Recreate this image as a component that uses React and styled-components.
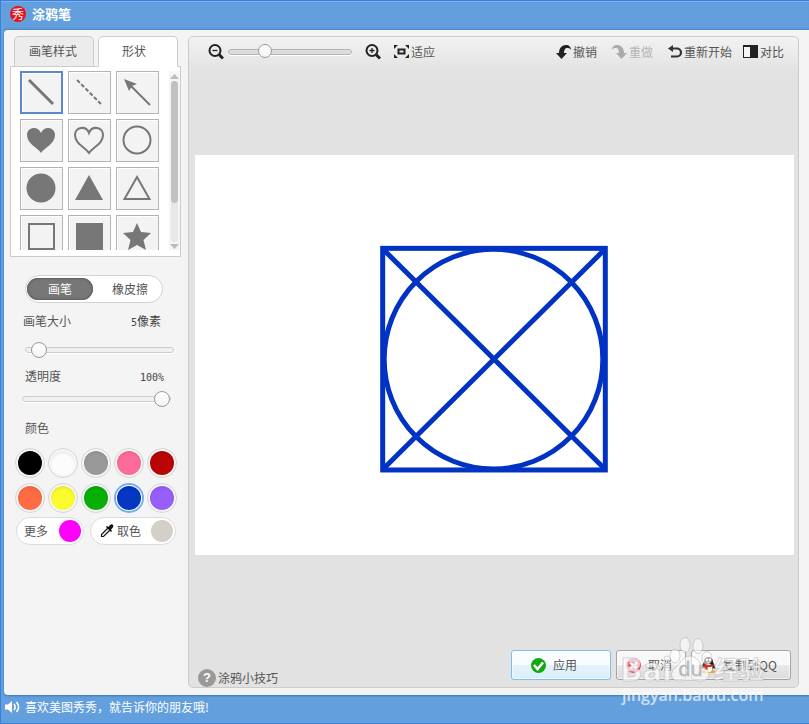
import { useState } from 'react'
import styled, { createGlobalStyle } from 'styled-components'

const GlobalStyle = createGlobalStyle`
  * {
    box-sizing: border-box;
  }

  body {
    margin: 0;
    font-family: "Noto Sans CJK SC", "Liberation Sans", sans-serif;
    font-size: 12px;
    line-height: 16px;
    color: #555;
  }

  button {
    font: inherit;
    color: inherit;
    padding: 0;
    border: 0;
    background: none;
    cursor: pointer;
    white-space: nowrap;
  }

  svg {
    display: block;
    flex-shrink: 0;
  }
`

const Window = styled.div`
  min-height: 100vh;
  display: flex;
  flex-direction: column;
  padding-left: 4px;
  background: #639fdc;
  border-top: 1px solid #3a7fdb;
  border-bottom: 1px solid #3a7fdb;
  box-shadow: inset 1px 0 #3a7fdb, inset 0 1px #7db2ee;
`

const TitleBar = styled.header`
  height: 29px;
  display: flex;
  align-items: center;
  gap: 6px;
  padding: 0 6px 4px;
  box-shadow: inset 0 -2px 2px -1px #4d86c4;
`

const Logo = styled.span`
  width: 16px;
  height: 16px;
  border-radius: 50%;
  background: #e8121c;
  color: white;
  font-size: 12px;
  text-align: center;
`

const Title = styled.h1`
  margin: 0;
  font-size: 13px;
  font-weight: 700;
  color: white;
`

const Body = styled.div`
  flex: 1;
  display: flex;
  padding: 6px 10px 7px 0;
  background: #f4f4f4;
  border-radius: 4px 0 0 4px;
  box-shadow: 0 1px 2px #3f78b5;
`

const Sidebar = styled.aside`
  width: 184px;
  flex-shrink: 0;
  padding-left: 6px;
`

const Tabs = styled.div`
  display: flex;
  gap: 4px;
  padding-left: 4px;
`

const Tab = styled.button`
  width: 80px;
  height: 31px;
  margin-bottom: -1px;
  padding: 0 ${props => props.$active ? '8px' : '2px'} 2px 0;
  border: 1px solid #ccc;
  border-bottom-color: ${props => props.$active ? 'white' : '#ccc'};
  border-radius: 5px 5px 0 0;
  background: ${props => props.$active ? 'white' : '#ececec'};
  position: relative;
`

const ShapePanel = styled.div`
  width: 171px;
  height: 191px;
  display: flex;
  justify-content: space-between;
  padding: 4px 0 6px 9px;
  border: 1px solid #ccc;
  background: white;
`

const ShapeGrid = styled.div`
  display: grid;
  grid-template-columns: repeat(3, 43px);
  grid-auto-rows: 43px;
  gap: 5px;
  overflow: hidden;
`

const ShapeButton = styled.button`
  display: flex;
  align-items: center;
  justify-content: center;
  padding: 0 1px 1px 0;
  border: ${props => props.$active ? '2px solid #5b89cd' : '1px solid #b3b3b3'};
  background: #f3f3f3;
  box-shadow: inset 1px 1px white;
  color: #777;
`

const Scrollbar = styled.div`
  width: 11px;
  display: flex;
  flex-direction: column;
  align-items: center;
  gap: 2px;
  padding: 3px 0 1px;
  background: #f5f5f5;
  color: #bbb;
`

const ScrollTrack = styled.div`
  flex: 1;
  width: 7px;
  border-radius: 4px;
  background: #e8e8e8;
`

const ScrollThumb = styled.div`
  height: 76%;
  border-radius: 4px;
  background: #c1c1c1;
`

const ModeSwitch = styled.div`
  width: 138px;
  height: 28px;
  display: flex;
  justify-content: space-between;
  margin: 18px 0 0 15px;
  padding: 2px 1px;
  border: 1px solid #d2d2d2;
  border-radius: 14px;
  background: white;
`

const ModeButton = styled.button`
  width: ${props => props.$width};
  border-radius: 11px;
  ${props => props.$active && `
    background: #777;
    color: white;
    box-shadow: inset 0 0 2px 1px #5f5f5f;
  `}
`

const SliderField = styled.div`
  width: ${props => props.$width};
  margin: ${props => props.$margin};
`

const SliderHead = styled.div`
  display: flex;
  align-items: baseline;
  justify-content: space-between;
  padding: 0 ${props => props.$inset} 0 0;
`

const OpacityHead = styled(SliderHead)`
  padding-left: 3px;
  margin-bottom: 5px;
`

const SizeRow = styled.div`
  padding: 11px 0 0 2px;
`

const Value = styled.output`
  color: #444;
`

const Digits = styled.span`
  font-family: "DejaVu Sans Mono", monospace;
  font-size: 10px;
`

const Range = styled.input`
  appearance: none;
  display: block;
  width: ${props => props.$width || '149px'};
  height: 16px;
  margin: 0;
  background: transparent;

  &::-webkit-slider-runnable-track {
    height: 6px;
    border: 1px solid ${props => props.$dark ? '#b5b5b5' : '#ccc'};
    border-radius: 3px;
    background: ${props => props.$dark ? '#ddd' : '#f0f0f0'};
    box-shadow: 0 1px white;
  }

  &::-webkit-slider-thumb {
    appearance: none;
    width: ${props => props.$dark ? '14px' : '16px'};
    height: ${props => props.$dark ? '14px' : '16px'};
    margin-top: -6px;
    border: 1px solid #999;
    border-radius: 50%;
    background: linear-gradient(white, #f4f4f4);
  }
`

const ColorTitle = styled.h2`
  margin: 13px 0 12px 15px;
  font-size: 12px;
  font-weight: 400;
`

const Swatches = styled.div`
  display: grid;
  grid-template-columns: repeat(5, 30px);
  gap: 5px 3px;
  padding-left: 5px;
`

const Swatch = styled.button`
  height: 30px;
  border-radius: 50%;
  border: ${props => props.$active ? '2px solid #72aef0' : '1px solid #d6d6d6'};
  padding: ${props => props.$active ? '1px' : '2px'};

  &::before {
    content: '';
    display: block;
    height: 24px;
    border-radius: 50%;
    background: ${props => props.$color};
    box-shadow: inset 0 2px 3px rgba(0, 0, 0, 0.08), 0 0 0 1px #f8f8f8;
  }
`

const Pills = styled.div`
  display: flex;
  gap: 6px;
  margin: 4px 0 0 6px;
`

const Pill = styled.button`
  width: ${props => props.$wide ? '86px' : '68px'};
  height: 28px;
  display: flex;
  align-items: center;
  justify-content: space-between;
  padding: 0 2px 0 ${props => props.$wide ? '9px' : '7px'};
  border: 1px solid #dcdcdc;
  border-radius: 14px;
  background: white;
`

const PillLabel = styled.span`
  display: flex;
  align-items: center;
  gap: 3px;
`

const Dot = styled.span`
  width: 22px;
  height: 22px;
  border-radius: 50%;
  background: ${props => props.$color};
`

const Workspace = styled.main`
  flex: 1;
  min-width: 0;
  display: flex;
  flex-direction: column;
  border: 1px solid #ccc;
  border-radius: 5px;
  background: linear-gradient(#f2f2f2, #e2e2e2 36px);
`

const Toolbar = styled.div`
  height: 29px;
  display: flex;
  align-items: center;
  justify-content: space-between;
  padding: 0 14px 0 19px;
`

const ToolGroup = styled.div`
  display: flex;
  align-items: center;
  gap: ${props => props.$gap};
`

const Tool = styled.button`
  display: flex;
  align-items: center;
  gap: 2px;

  &:disabled {
    color: #b5b5b5;
    cursor: default;
  }
`

const ZoomInTool = styled(Tool)`
  margin-left: 9px;
`

const Stage = styled.div`
  flex: 1;
  display: flex;
  align-items: center;
  justify-content: center;
  padding: 0 4px 0 6px;
`

const Canvas = styled.div`
  width: 100%;
  max-width: 900px;
  aspect-ratio: 3 / 2;
  background: white;

  svg {
    width: 100%;
    height: 100%;
  }
`

const Footer = styled.div`
  display: flex;
  align-items: flex-end;
  justify-content: space-between;
  padding: 0 7px 0 9px;
  position: relative;
`

const HelpLink = styled.a`
  display: flex;
  align-items: center;
  gap: 2px;
  color: #555;
  text-decoration: none;
`

const HelpMark = styled.span`
  width: 18px;
  height: 18px;
  border-radius: 50%;
  background: #999;
  color: white;
  font: 700 13px/18px "Liberation Sans", sans-serif;
  text-align: center;
`

const Actions = styled.div`
  display: flex;
  gap: 5px;
  padding: 6px 0 7px;
`

const ActionButton = styled.button`
  width: ${props => props.$width};
  height: 30px;
  display: flex;
  align-items: center;
  gap: 7px;
  padding-left: ${props => props.$primary ? '19px' : '9px'};
  border: 1px solid ${props => props.$primary ? '#80bfe5' : '#a3a3a3'};
  border-radius: 3px;
  background: ${props => props.$primary
    ? 'linear-gradient(#fafdff 50%, #e4f3fc 50%, #d9effb)'
    : 'linear-gradient(#f8f8f8 50%, #e9e9e9 50%, #dcdcdc)'};
  box-shadow: inset 0 0 0 1px rgba(255, 255, 255, 0.6);
`

const Watermark = styled.div`
  position: absolute;
  right: 34px;
  bottom: -18px;
  width: 144px;
  color: rgba(255, 255, 255, 0.7);
  font-family: "Open Sans", "Noto Sans CJK SC", sans-serif;
  pointer-events: none;
`

const WatermarkBrand = styled.div`
  display: flex;
  align-items: center;
  height: 32px;
  font-size: 33px;
  font-weight: 700;
  line-height: 32px;
  -webkit-text-stroke: 1px rgba(190, 190, 190, 0.6);
`

const WatermarkDu = styled.span`
  color: rgba(150, 150, 150, 0.7);
  font-size: 20px;
  font-weight: 400;
  margin-left: 6px;
  position: relative;
  z-index: 1;
`

const WatermarkSuffix = styled.span`
  font-size: 25px;
  margin-left: auto;
`

const WatermarkUrl = styled.div`
  padding-left: 2px;
  font-size: 16px;
  font-weight: 600;
  line-height: 20px;
`

const WatermarkPaw = styled.svg`
  position: absolute;
  left: 48px;
  top: -16px;
`

const StatusBar = styled.footer`
  height: 28px;
  display: flex;
  align-items: center;
  gap: 5px;
  padding-bottom: 4px;
  color: white;
`

const line = { fill: 'none', stroke: 'currentColor', strokeWidth: 2 }
const HEART = 'M15 28C11 22 1 19 1 10C1 2 12 0 15 8C18 0 29 2 29 10C29 19 19 22 15 28Z'

const shapes = [
  { name: '直线', draw: <path d="M3 3L27 27" {...line} strokeWidth="3" /> },
  { name: '虚线', draw: <path d="M3 3L27 27" {...line} strokeDasharray="4 2" /> },
  { name: '箭头', draw: <><path d="M6 6L28 28" {...line} /><path d="M2 2L15 7L10 9L7 14Z" fill="currentColor" /></> },
  { name: '实心心形', draw: <path d={HEART} fill="currentColor" /> },
  { name: '心形', draw: <path d={HEART} {...line} /> },
  { name: '圆形', draw: <circle cx="15" cy="15" r="13.5" {...line} /> },
  { name: '实心圆形', draw: <circle cx="15" cy="15" r="14.5" fill="currentColor" /> },
  { name: '实心三角形', draw: <path d="M15 2L29 27H1Z" fill="currentColor" /> },
  { name: '三角形', draw: <path d="M15 4L27.5 26H2.5Z" {...line} /> },
  { name: '方形', draw: <rect x="3" y="3" width="25" height="25" {...line} /> },
  { name: '实心方形', draw: <rect x="2" y="2" width="27" height="27" fill="currentColor" /> },
  { name: '星形', draw: <path d="M15 2L19 11L29 12L21.500 19L24 29L15 24L6 29L8.500 19L1 12L11 11Z" fill="currentColor" /> },
]

const colors = [
  ['黑色', '#000'], ['白色', '#fcfcfc'], ['灰色', '#999'], ['粉色', '#fd6c98'], ['红色', '#b90505'],
  ['橙色', '#ff6c43'], ['黄色', '#fafc2f'], ['绿色', '#06b006'], ['蓝色', '#0537c3'], ['紫色', '#965ffc'],
]

const ZoomIcon = ({ plus }) => (
  <svg width="16" height="16" viewBox="0 0 16 16" fill="none" stroke="#222">
    <circle cx="7" cy="6.500" r="5.500" strokeWidth="2" />
    <path d={plus ? 'M4.500 6.500h5M7 4v5' : 'M4.500 6.500h5'} strokeWidth="1.300" />
    <path d="M11 10.500L15 14.500" strokeWidth="3" />
  </svg>
)

const FitIcon = () => (
  <svg width="15" height="13" viewBox="0 0 15 13" fill="#222">
    <path d="M0 0h4L0 4zM15 0v4L11 0zM0 13V9l4 4zM15 13h-4l4-4z" />
    <rect x="4.500" y="4.500" width="6" height="4" fill="none" stroke="#222" strokeWidth="2" />
  </svg>
)

const CurveArrow = ({ flip }) => (
  <svg width="15" height="14" viewBox="0 0 15 14" fill={flip ? '#aaa' : '#222'}>
    <path
      transform={flip ? 'translate(15 0) scale(-1 1)' : undefined}
      d="M5.500 14L0 8h3C3 3 6 0 10 0c3 0 5 2 5 5c-1-2-3-2-4-2C9 3 8 5 8 8h3z"
    />
  </svg>
)

const RestartIcon = () => (
  <svg width="14" height="13" viewBox="0 0 14 13">
    <path d="M4 3.500h5a4 4 0 0 1 0 8H3" fill="none" stroke="#333" strokeWidth="2.200" />
    <path d="M0 3.500L5 0v7z" fill="#333" />
  </svg>
)

const CompareIcon = () => (
  <svg width="15" height="13" viewBox="0 0 15 13">
    <path d="M0 0h15v13H0z" fill="#222" />
    <path d="M1 2h6v10H1z" fill="#f4f4f4" />
  </svg>
)

const DropperIcon = () => (
  <svg width="14" height="14" viewBox="0 0 14 14">
    <path d="M8 4L1.500 10.500v2h2L10 6" fill="white" stroke="#111" strokeWidth="1.200" />
    <path d="M6 3l1-1 1.500 1C10 1 11 0 12.500 0.500C14 2 13.500 3 11 5.500L12 7l-1 1z" fill="#111" />
  </svg>
)

const ApplyIcon = () => (
  <svg width="15" height="15" viewBox="0 0 15 15">
    <circle cx="7.500" cy="7.500" r="7.500" fill="#12a812" />
    <path d="M3 7l3.500 4L12 4.500" fill="none" stroke="white" strokeWidth="2.500" />
  </svg>
)

const CancelIcon = () => (
  <svg width="15" height="15" viewBox="0 0 15 15">
    <circle cx="7.500" cy="7.500" r="7.500" fill="#ee4a68" />
    <path d="M4 4.500l7 6M11 4.500l-7 6" stroke="white" strokeWidth="2.500" />
  </svg>
)

const PenguinIcon = () => (
  <svg width="15" height="16" viewBox="0 0 15 16">
    <ellipse cx="4" cy="14.500" rx="3.500" ry="1.500" fill="#f5a31c" />
    <ellipse cx="11" cy="14.500" rx="3.500" ry="1.500" fill="#f5a31c" />
    <path d="M7.500 0C4 0 3 3 3 5L0.500 10v2l2-1c1 4 9 4 10 0l2 1v-2L12 5C12 3 11 0 7.500 0z" fill="#222" />
    <ellipse cx="7.500" cy="11" rx="4" ry="4" fill="white" />
    <circle cx="6" cy="3" r="1.200" fill="white" />
    <circle cx="9" cy="3" r="1.200" fill="white" />
    <path d="M5 5h5l-2.500 1.500z" fill="#f5a31c" />
    <path d="M2.500 7c3 1.500 7 1.500 10 0v2c-2 1-4 1-6 1v3H4V9.500L2.500 9z" fill="#e3231b" />
  </svg>
)

const SpeakerIcon = () => (
  <svg width="16" height="14" viewBox="0 0 16 14">
    <path d="M1 4.500h3L8 1v12L4 9.500H1z" fill="white" />
    <path d="M10 4c1.500 2 1.500 4 0 6M12.500 2c2.500 3 2.500 7 0 10" fill="none" stroke="white" strokeWidth="1.600" />
  </svg>
)

const modes = [
  { name: '画笔', width: '66px' },
  { name: '橡皮擦', width: '62px' },
]

const App = () => {
  const [tab, setTab] = useState('形状')
  const [shape, setShape] = useState('直线')
  const [mode, setMode] = useState('画笔')
  const [color, setColor] = useState('蓝色')
  const [size, setSize] = useState(5)
  const [opacity, setOpacity] = useState(100)
  const [zoom, setZoom] = useState(27)

  return (
    <Window>
      <GlobalStyle />
      <TitleBar>
        <Logo>秀</Logo>
        <Title>涂鸦笔</Title>
      </TitleBar>

      <Body>
        <Sidebar>
          <Tabs role="tablist">
            {['画笔样式', '形状'].map(name => (
              <Tab key={name} role="tab" aria-selected={tab === name} $active={tab === name} onClick={() => setTab(name)}>
                {name}
              </Tab>
            ))}
          </Tabs>
          <ShapePanel>
            <ShapeGrid>
              {shapes.map(item => (
                <ShapeButton
                  key={item.name}
                  aria-label={item.name}
                  $active={shape === item.name}
                  onClick={() => setShape(item.name)}
                >
                  <svg width="30" height="30" viewBox="0 0 30 30">{item.draw}</svg>
                </ShapeButton>
              ))}
            </ShapeGrid>
            <Scrollbar>
              <svg width="9" height="5" viewBox="0 0 9 5"><path d="M0 5L4.500 0L9 5z" fill="currentColor" /></svg>
              <ScrollTrack><ScrollThumb /></ScrollTrack>
              <svg width="9" height="5" viewBox="0 0 9 5"><path d="M0 0h9L4.500 5z" fill="currentColor" /></svg>
            </Scrollbar>
          </ShapePanel>

          <ModeSwitch>
            {modes.map(({ name, width }) => (
              <ModeButton
                key={name}
                aria-pressed={mode === name}
                $active={mode === name}
                $width={width}
                onClick={() => setMode(name)}
              >
                {name}
              </ModeButton>
            ))}
          </ModeSwitch>

          <SliderField $width="151px" $margin="10px 0 0 13px">
            <SliderHead $inset="13px">
              <label htmlFor="size">画笔大小</label>
              <Value htmlFor="size"><Digits>{size}</Digits>像素</Value>
            </SliderHead>
            <SizeRow>
              <Range id="size" type="range" min="1" max="100" value={size} onChange={e => setSize(+e.target.value)} />
            </SizeRow>
          </SliderField>
          <SliderField $width="149px" $margin="10px 0 0 12px">
            <OpacityHead $inset="7px">
              <label htmlFor="opacity">透明度</label>
              <Value htmlFor="opacity"><Digits>{opacity}%</Digits></Value>
            </OpacityHead>
            <Range id="opacity" type="range" value={opacity} onChange={e => setOpacity(+e.target.value)} />
          </SliderField>

          <ColorTitle>颜色</ColorTitle>
          <Swatches>
            {colors.map(([name, value]) => (
              <Swatch key={name} aria-label={name} $color={value} $active={color === name} onClick={() => setColor(name)} />
            ))}
          </Swatches>
          <Pills>
            <Pill>更多<Dot $color="#f0f" /></Pill>
            <Pill $wide>
              <PillLabel><DropperIcon />取色</PillLabel>
              <Dot $color="#d4d0c8" />
            </Pill>
          </Pills>
        </Sidebar>

        <Workspace>
          <Toolbar>
            <ToolGroup $gap="4px">
              <Tool aria-label="缩小"><ZoomIcon /></Tool>
              <Range
                $dark
                $width="124px"
                type="range"
                aria-label="缩放"
                value={zoom}
                onChange={e => setZoom(+e.target.value)}
              />
              <ToolGroup $gap="13px">
                <ZoomInTool aria-label="放大"><ZoomIcon plus /></ZoomInTool>
                <Tool><FitIcon />适应</Tool>
              </ToolGroup>
            </ToolGroup>
            <ToolGroup $gap="15px">
              <Tool><CurveArrow />撤销</Tool>
              <Tool disabled><CurveArrow flip />重做</Tool>
              <ToolGroup $gap="11px">
                <Tool><RestartIcon />重新开始</Tool>
                <Tool><CompareIcon />对比</Tool>
              </ToolGroup>
            </ToolGroup>
          </Toolbar>

          <Stage>
            <Canvas>
              <svg viewBox="0 0 600 400" fill="none" stroke="#0033c4" strokeWidth="5">
                <rect x="188" y="93.500" width="223" height="222" />
                <ellipse cx="299" cy="204.500" rx="109.500" ry="110" />
                <path d="M188 94L411 315M411 94L188 315" />
              </svg>
            </Canvas>
          </Stage>

          <Footer>
            <HelpLink href="#tips"><HelpMark>?</HelpMark>涂鸦小技巧</HelpLink>
            <Actions>
              <ActionButton $primary $width="100px"><ApplyIcon />应用</ActionButton>
              <ActionButton $width="70px"><CancelIcon />取消</ActionButton>
              <ActionButton $width="100px"><PenguinIcon />复制到QQ</ActionButton>
            </Actions>
            <Watermark>
              <WatermarkPaw width="44" height="46" viewBox="0 0 44 46" fill="rgba(255,255,255,0.6)" stroke="rgba(170,170,170,0.5)">
                <ellipse cx="17" cy="8" rx="5" ry="7.500" />
                <ellipse cx="30" cy="9" rx="5" ry="7.500" />
                <ellipse cx="7" cy="19" rx="5" ry="7" />
                <ellipse cx="39" cy="21" rx="5" ry="6.500" />
                <path d="M22 19C14 19 13 27 7 31C1 36 3 45 12 44C18 43 25 43 31 44C41 45 44 36 37 31C31 27 30 19 22 19Z" />
              </WatermarkPaw>
              <WatermarkBrand>Bai<WatermarkDu>du</WatermarkDu><WatermarkSuffix>经验</WatermarkSuffix></WatermarkBrand>
              <WatermarkUrl>jingyan.baidu.com</WatermarkUrl>
            </Watermark>
          </Footer>
        </Workspace>
      </Body>

      <StatusBar><SpeakerIcon />喜欢美图秀秀，就告诉你的朋友哦!</StatusBar>
    </Window>
  )
}

export default App
